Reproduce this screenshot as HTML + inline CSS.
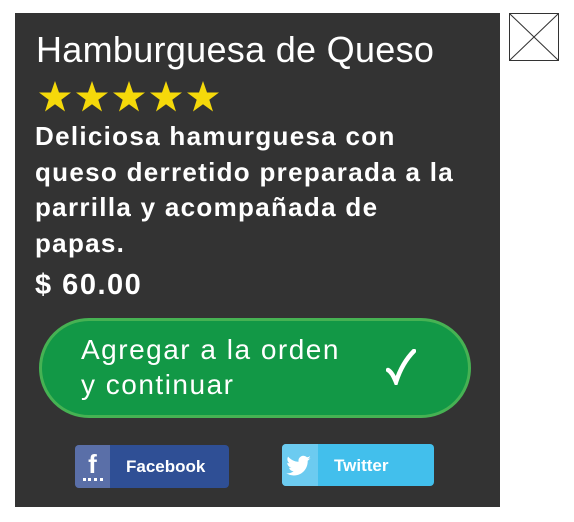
<!DOCTYPE html>
<html><head><meta charset="utf-8"><style>
html,body{margin:0;padding:0;background:#fff;width:574px;height:522px;overflow:hidden;font-family:"Liberation Sans",Arial,sans-serif}
.panel{position:absolute;left:15px;top:13px;width:485px;height:494px;background:#333333}
.title{position:absolute;left:21px;top:17px;color:#fff;font-size:36px;letter-spacing:0.3px;white-space:nowrap;line-height:40px}
.stars{position:absolute;left:23px;top:67px}
.desc{position:absolute;left:20px;top:106px;color:#fff;font-size:26px;letter-spacing:1.3px;font-weight:bold;line-height:35.5px;white-space:nowrap}
.price{position:absolute;left:20px;top:254px;color:#fff;font-size:29px;letter-spacing:1.5px;font-weight:bold;line-height:36px}
.btn{position:absolute;left:24px;top:305px;width:426px;height:94px;border:3px solid #46b253;border-radius:50px;background:#129846}
.btn .t{position:absolute;left:39px;top:11px;color:#fff;font-size:28px;letter-spacing:1.5px;line-height:35px;white-space:nowrap}
.btn .c{position:absolute;left:344px;top:28px}
.fb{position:absolute;left:60px;top:432px;width:154px;height:43px;border-radius:4px;background:#2f4f95;overflow:hidden}
.fb .i{position:absolute;left:0;top:0;width:35px;height:43px;background:#5a6fa8;color:#fff;font-weight:bold;font-size:26px;text-align:center;line-height:38px}
.fb .l,.tw .l{position:absolute;color:#fff;font-weight:bold;font-size:17px;top:12px}
.tw{position:absolute;left:267px;top:431px;width:152px;height:42px;border-radius:4px;background:#42bfec;overflow:hidden}
.tw .i{position:absolute;left:0;top:0;width:36px;height:42px;background:#6ccbf0}
.x{position:absolute;left:509px;top:13px;width:48px;height:46px;border:1px solid #333;background:#fff}
</style></head><body>
<div class="panel">
<div class="title">Hamburguesa de Queso</div>
<div class="stars"><svg width="190" height="34" viewBox="0 0 190 34">
<defs><polygon id="s" points="17,1 21,12.5 33,12.5 23.3,19.7 27,31.5 17,24.3 7,31.5 10.7,19.7 1,12.5 13,12.5" fill="#f5d90a"/></defs>
<use href="#s" x="0"/><use href="#s" x="37"/><use href="#s" x="74"/><use href="#s" x="111"/><use href="#s" x="148"/></svg></div>
<div class="desc">Deliciosa hamurguesa con<br>queso derretido preparada a la<br>parrilla y acompañada de<br>papas.</div>
<div class="price">$ 60.00</div>
<div class="btn"><div class="t">Agregar a la orden<br>y continuar</div><div class="c"><svg width="30" height="36" viewBox="0 0 30 36"><path d="M2 21 Q6 23 10 33 Q16 14 28 2" stroke="#fff" stroke-width="4.5" fill="none" stroke-linecap="round"/></svg></div></div>
<div class="fb"><div class="i">f<div style="position:absolute;left:8px;top:33px;width:20px;height:3px;border-bottom:3px dotted #fff;box-sizing:border-box"></div></div><div class="l" style="left:51px">Facebook</div></div>
<div class="tw"><div class="i"><svg width="36" height="42" viewBox="0 0 36 42"><path d="M29 14c-1 .5-2 .7-3 .8 1-.6 1.8-1.6 2.2-2.7-1 .6-2 1-3.2 1.2a5 5 0 0 0-8.5 4.5c-4.2-.2-7.9-2.2-10.4-5.2-1.4 2.4-.6 5.3 1.5 6.7-.8 0-1.6-.3-2.3-.6 0 2.4 1.7 4.4 4 4.9-.7.2-1.5.2-2.3.1.6 2 2.5 3.4 4.6 3.5-2 1.6-4.7 2.4-7.300 2.100 2.200 1.400 4.800 2.200 7.500 2.200 9.100 0 14.200-7.700 13.900-14.700 1-.7 1.800-1.600 2.500-2.600z" fill="#fff"/></svg></div><div class="l" style="left:52px">Twitter</div></div>
</div>
<div class="x"><svg width="48" height="46"><path d="M0 0L48 46M48 0L0 46" stroke="#333" stroke-width="1"/></svg></div>
</body></html>
